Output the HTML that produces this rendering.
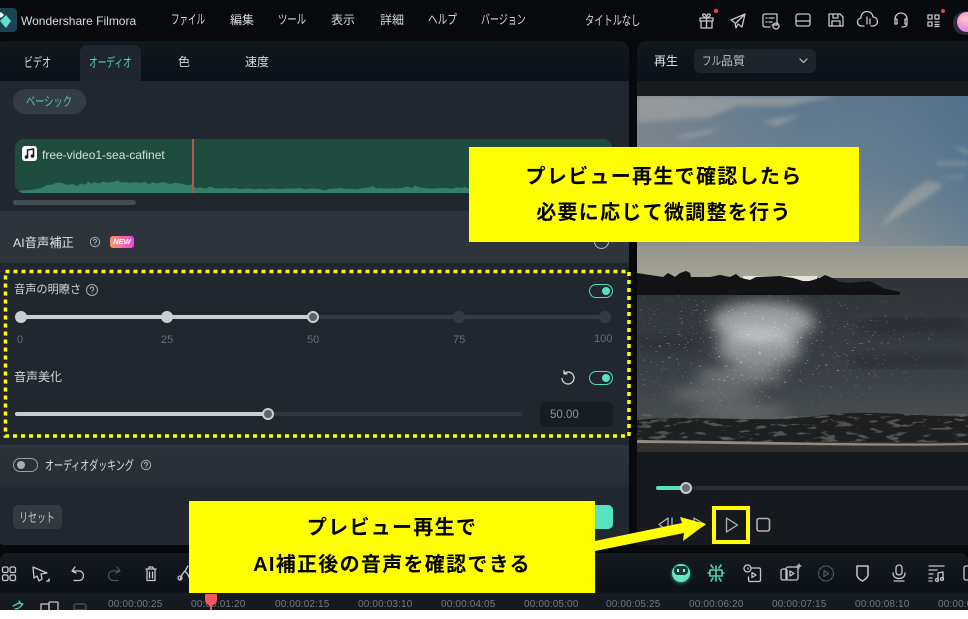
<!DOCTYPE html>
<html lang="ja"><head><meta charset="utf-8"><title>Filmora</title>
<style>
*{box-sizing:border-box;margin:0;padding:0}
html,body{width:968px;height:619px;overflow:hidden;background:#fff}
body{position:relative;font-family:"Liberation Sans","Noto Sans CJK JP",sans-serif;color:#d5d9dd}
.a{position:absolute}
.t{position:absolute;white-space:nowrap;line-height:1}
.k{transform:scaleX(.69);transform-origin:0 0}
.y{position:absolute;background:#ff0;color:#000;font-weight:700;font-size:20px;text-align:center;letter-spacing:1.3px}
svg{position:absolute;overflow:visible}
.i{fill:none;stroke:#c4c8cc;stroke-width:1.3;stroke-linecap:round;stroke-linejoin:round}
.tc{position:absolute;top:600px;font-size:10px;line-height:1;color:#6f7a85;letter-spacing:.15px;white-space:nowrap}
</style></head><body>
<div class="a" style="left:0;top:0;width:968px;height:610px;background:#07090c;overflow:hidden">

<!-- logo -->
<div class="a" style="left:-6px;top:8px;width:23px;height:24px;border-radius:4px;background:#1d4254"></div>
<svg style="left:0;top:0" width="20" height="40"><path d="M6 15l5 6-5 7-6-7z" fill="#5fe3c8"/><path d="M1 12l3 3-3 3-3-3z" fill="#fff"/></svg>
<div class="t" style="left:21px;top:15px;font-size:12px;color:#d8dcdf">Wondershare Filmora</div>
<div class="t k" style="left:171px;top:13px;font-size:13px;transform:scaleX(.655)">ファイル</div>
<div class="t" style="left:230px;top:14px;font-size:12px">編集</div>
<div class="t k" style="left:278px;top:13px;font-size:13px;transform:scaleX(.72)">ツール</div>
<div class="t" style="left:331px;top:14px;font-size:12px">表示</div>
<div class="t" style="left:380px;top:14px;font-size:12px">詳細</div>
<div class="t k" style="left:428px;top:13px;font-size:13px;transform:scaleX(.74)">ヘルプ</div>
<div class="t k" style="left:481px;top:13px;font-size:13px">バージョン</div>
<div class="t k" style="left:585px;top:14px;font-size:13px;transform:scaleX(.71)">タイトルなし</div>

<!-- top right icons -->
<svg class="i" style="left:0;top:0" width="968" height="40">
<path d="M700 18h13v3h-13zM701 21v7h11v-7M706.500 18v10M706.500 18c-3-1-5-3-3-4 2-.5 3 2 3 4zM706.500 18c3-1 5-3 3-4-2-.5-3 2-3 4z"/>
<path d="M731 20l14-6-3 13-4-3-2 4-1-5zM736 23l9-9"/>
<path d="M765 14h12v11h-5M765 14q-2 0-2 2v9q0 2 2 2h5M766 18h1M769 18h5M766 22h1M769 22h3"/><circle cx="776" cy="26" r="3"/>
<rect x="796" y="14" width="14" height="12" rx="2"/><path d="M796 21h14"/>
<path d="M829 14h11l3 3v9h-14zM833 14v4h5v-4M832 26v-5h8v5"/>
<path d="M864 26h-2a4 4 0 0 1-1-8 6 6 0 0 1 12-1 4.500 4.500 0 0 1 0 9h-2M867 17v7M870 19v5"/>
<path d="M895 21v-2a6 6 0 0 1 12 0v2M895 19v5h2v-5zM905 19h2v5h-2zM907 24c0 2-2 3-5 3"/>
<path d="M928 15h4v4h-4zM928 22h4v4h-4zM935 15h4v4h-4zM935 22h4M935 24.500h4M935 26.500h4"/>
</svg>
<div class="a" style="left:714px;top:9px;width:4px;height:4px;border-radius:50%;background:#f0444c"></div>
<div class="a" style="left:941px;top:9px;width:4px;height:4px;border-radius:50%;background:#f0444c"></div>
<div class="a" style="left:953px;top:11px;width:24px;height:24px;border-radius:50%;background:#2a2f36"></div>
<div class="a" style="left:957px;top:12px;width:20px;height:20px;border-radius:50%;background:radial-gradient(circle at 40% 35%,#ffc9c0,#e87fe6 70%)"></div>

<!-- left panel -->
<div class="a" style="left:-5px;top:41px;width:634px;height:504px;border-radius:10px;background:#20272e;overflow:hidden">
 <div class="a" style="left:0;top:0;width:634px;height:40px;background:linear-gradient(#12181e,#0a1119)"></div>
 <div class="a" style="left:85px;top:4px;width:61px;height:36px;border-radius:7px 7px 0 0;background:#20262d"></div>
 <div class="a" style="left:5px;top:170px;width:629px;height:52px;background:#2e343c"></div>
 <div class="a" style="left:5px;top:404px;width:629px;height:42px;background:linear-gradient(#2e343c,#262c33)"></div>
</div>
<div class="t k" style="left:24px;top:56px;font-size:13px">ビデオ</div>
<div class="t k" style="left:89px;top:56px;font-size:13px;color:#55cfb4;transform:scaleX(.665)">オーディオ</div>
<div class="t" style="left:178px;top:56px;font-size:12px">色</div>
<div class="t" style="left:245px;top:56px;font-size:12px">速度</div>
<div class="a" style="left:13px;top:89px;width:73px;height:25px;border-radius:13px;background:#343c44"></div>
<div class="t k" style="left:26px;top:95px;font-size:13px;color:#56bfa8;transform:scaleX(.71)">ベーシック</div>

<!-- clip -->
<div class="a" style="left:15px;top:139px;width:597px;height:54px;border-radius:9px;background:#1e4d40;overflow:hidden">
<svg style="left:0;top:0" width="597" height="54"><path transform="matrix(1 0 0 .64 0 19.500)" fill="#347f68" d="M0 54V52L8 50 17 49 26 46 33 41 37 41 41 38 47 38 51 41 58 40 62 43 66 39 71 41 73 36 76 39 80 37 84 39 88 36 92 38 96 37 100 36 103 34 106 38 110 37 115 38 120 37 125 38 130 37 134 40 138 37 142 39 147 37 151 38 155 40 160 38 165 39 169 40 173 42 176 40 178 44 182 46 186 45 190 47 195 44 199 46 204 47 210 46 215 47 220 46 225 48 230 47 235 47 240 48 245 47 250 48 255 47 260 47 265 48 270 47 275 47 280 47 285 46 290 48 295 47 300 47 305 48 310 50 315 47 320 47 325 46 330 47 335 47 340 48 345 47 350 46 355 45 358 43 361 47 366 46 370 47 374 47 378 46 382 47 386 46 390 45 393 44 397 46 400 42 404 45 409 46 414 47 420 47 425 46 430 46 434 47 438 47 442 45 446 46 450 45 455 47 456 54z"/></svg>
<div class="a" style="left:177px;top:0;width:2px;height:54px;background:#b4594c"></div>
</div>
<div class="a" style="left:22px;top:146px;width:15px;height:15px;border-radius:3px;background:#fff"></div>
<svg style="left:22px;top:146px" width="15" height="15"><path d="M5.500 11V4L11.500 3V10" fill="none" stroke="#1a1a1a" stroke-width="1.500"/><circle cx="4.500" cy="11" r="1.800" fill="#1a1a1a"/><circle cx="10.500" cy="10" r="1.800" fill="#1a1a1a"/></svg>
<div class="t" style="left:42px;top:149px;font-size:12px;color:#cfe1db">free-video1-sea-cafinet</div>
<div class="a" style="left:13px;top:200px;width:123px;height:5px;border-radius:3px;background:#444c56"></div>

<!-- AI section -->
<div class="t" style="left:13px;top:237px;font-size:12.300px;color:#e2e5e8">AI音声補正</div>
<svg class="i" style="left:89px;top:236px;stroke:#a8adb2;stroke-width:1" width="12" height="12"><circle cx="6" cy="6" r="4.700"/><path d="M4.500 4.800a1.500 1.500 0 1 1 2 1.500q-.5.300-.5 1M6 8.700v.1"/></svg>
<div class="a" style="left:110px;top:236px;width:24px;height:12px;border-radius:3px;background:linear-gradient(90deg,#f6975c,#ee45e6);font:italic 700 7.500px/12px 'Liberation Sans',sans-serif;color:#fff;text-align:center">NEW</div>
<div class="a" style="left:594px;top:234px;width:15px;height:15px;border-radius:50%;border:1.500px solid #b8bcc0"></div>

<!-- clarity -->
<div class="t" style="left:14px;top:285px;font-size:11.200px;color:#cdd2d7">音声の明瞭さ</div>
<svg class="i" style="left:85px;top:283px;stroke:#a8adb2;stroke-width:1" width="14" height="14"><circle cx="7" cy="7" r="5.500"/><path d="M5.300 5.700a1.700 1.700 0 1 1 2.300 1.600q-.6.400-.6 1M7 10v.1"/></svg>
<div class="a" style="left:589px;top:284px;width:24px;height:14px;border-radius:7px;border:1.300px solid #57d9bb"></div>
<div class="a" style="left:602px;top:287px;width:8px;height:8px;border-radius:50%;background:#57e3c2"></div>
<div class="a" style="left:21px;top:315px;width:292px;height:4px;background:#c8ced3"></div>
<div class="a" style="left:313px;top:315px;width:292px;height:4px;background:#343b44"></div>
<div class="a" style="left:15px;top:311px;width:12px;height:12px;border-radius:50%;background:#c8ced3"></div>
<div class="a" style="left:161px;top:311px;width:12px;height:12px;border-radius:50%;background:#c8ced3"></div>
<div class="a" style="left:307px;top:311px;width:12px;height:12px;border-radius:50%;background:#5c636b;border:2px solid #c8ced3"></div>
<div class="a" style="left:453px;top:311px;width:12px;height:12px;border-radius:50%;background:#343b44"></div>
<div class="a" style="left:599px;top:311px;width:12px;height:12px;border-radius:50%;background:#343b44"></div>
<div class="t" style="left:17px;top:335px;font-size:11px;color:#666e77">0</div>
<div class="t" style="left:161px;top:335px;font-size:11px;color:#666e77">25</div>
<div class="t" style="left:307px;top:335px;font-size:11px;color:#666e77">50</div>
<div class="t" style="left:453px;top:335px;font-size:11px;color:#666e77">75</div>
<div class="t" style="left:594px;top:334px;font-size:11px;color:#666e77">100</div>

<!-- beautify -->
<div class="t" style="left:14px;top:371px;font-size:12px">音声美化</div>
<svg class="i" style="left:560px;top:370px;stroke:#d0d4d8" width="16" height="16"><path d="M4 3.500a6 6 0 1 1-2 5M4 .8V3.800H7"/></svg>
<div class="a" style="left:589px;top:371px;width:24px;height:14px;border-radius:7px;border:1.300px solid #57d9bb"></div>
<div class="a" style="left:602px;top:374px;width:8px;height:8px;border-radius:50%;background:#57e3c2"></div>
<div class="a" style="left:15px;top:412px;width:254px;height:4px;border-radius:2px;background:#c8ced3"></div>
<div class="a" style="left:268px;top:412px;width:254px;height:4px;border-radius:2px;background:#2f363e"></div>
<div class="a" style="left:262px;top:408px;width:12px;height:12px;border-radius:50%;background:#5c636b;border:2px solid #c8ced3"></div>
<div class="a" style="left:540px;top:402px;width:73px;height:25px;border-radius:5px;background:#181d22"></div>
<div class="t" style="left:550px;top:410px;font-size:11.500px;color:#8c95a0">50.00</div>

<!-- dashed annotation -->
<svg style="left:0;top:0" width="640" height="445"><rect x="5.500" y="271.500" width="623.500" height="164.500" fill="none" stroke="#ff0" stroke-width="3.500" stroke-dasharray="4 4"/></svg>

<!-- ducking -->
<div class="a" style="left:13px;top:458px;width:25px;height:14px;border-radius:7px;border:1.200px solid #9aa0a6"></div>
<div class="a" style="left:17px;top:461px;width:8px;height:8px;border-radius:50%;background:#a9aeb3"></div>
<div class="t k" style="left:45px;top:459px;font-size:13px;color:#d8dbde">オーディオダッキング</div>
<svg class="i" style="left:140px;top:459px;stroke:#a8adb2;stroke-width:1" width="12" height="12"><circle cx="6" cy="6" r="4.700"/><path d="M4.500 4.800a1.500 1.500 0 1 1 2 1.500q-.5.300-.5 1M6 8.700v.1"/></svg>
<div class="a" style="left:13px;top:505px;width:49px;height:24px;border-radius:5px;background:#333a42"></div>
<div class="t k" style="left:19px;top:511px;font-size:13px;color:#c0c5ca">リセット</div>
<div class="a" style="left:580px;top:505px;width:33px;height:24px;border-radius:5px;background:#57e3c2"></div>

<!-- right panel -->
<div class="a" style="left:637px;top:41px;width:340px;height:504px;border-radius:10px;background:#191c1f;overflow:hidden">
 <div class="a" style="left:0;top:0;width:340px;height:40px;background:linear-gradient(#12181e,#0a1119)"></div>
 <div class="a" style="left:0;top:411px;width:340px;height:93px;background:#181b1f"></div>
</div>
<div class="t" style="left:654px;top:55px;font-size:12px;color:#e4e6e8">再生</div>
<div class="a" style="left:694px;top:49px;width:122px;height:24px;border-radius:6px;background:#1e242b"></div>
<div class="t k" style="left:702px;top:55px;font-size:12px;color:#b9bec3;transform:scaleX(.8)">フル</div>
<div class="t" style="left:721px;top:55px;font-size:12px;color:#b9bec3">品質</div>
<svg class="i" style="left:798px;top:57px;stroke:#a9aeb3" width="12" height="8"><path d="M2 2l3.500 3.500L9 2"/></svg>

<!-- photo -->
<svg style="left:637px;top:96px;overflow:hidden" width="331" height="356" viewBox="0 0 331 356">
<defs>
<linearGradient id="sky" x1="0" y1="0" x2="0" y2="1"><stop offset="0" stop-color="#5a748b"/><stop offset=".45" stop-color="#6a7f8f"/><stop offset=".75" stop-color="#8a908f"/><stop offset="1" stop-color="#a8a496"/></linearGradient>
<linearGradient id="skyl" x1="0" y1="0" x2="1" y2="0"><stop offset="0" stop-color="#88898b" stop-opacity=".7"/><stop offset=".5" stop-color="#7a8a98" stop-opacity=".15"/><stop offset="1" stop-color="#4a6f90" stop-opacity=".5"/></linearGradient>
<linearGradient id="sea" x1="0" y1="0" x2="0" y2="1"><stop offset="0" stop-color="#303439"/><stop offset=".55" stop-color="#3a4045"/><stop offset="1" stop-color="#505556"/></linearGradient>
<radialGradient id="gm" cx=".36" cy=".38" r=".6"><stop offset="0" stop-color="#fff"/><stop offset=".5" stop-color="#999"/><stop offset="1" stop-color="#111"/></radialGradient>
<mask id="spm"><rect x="0" y="199" width="331" height="130" fill="url(#gm)"/></mask>
<filter id="sp" x="0" y="0" width="100%" height="100%" color-interpolation-filters="sRGB"><feTurbulence type="fractalNoise" baseFrequency=".32 .7" numOctaves="2" seed="4"/><feColorMatrix values="0 0 0 0 1 0 0 0 0 1 0 0 0 0 1 9 9 0 0 -11.800"/></filter>
<filter id="dk" x="0" y="0" width="100%" height="100%" color-interpolation-filters="sRGB"><feTurbulence type="fractalNoise" baseFrequency=".06 .25" numOctaves="3" seed="9"/><feColorMatrix values="0 0 0 0 .42 0 0 0 0 .42 0 0 0 0 .4 9 0 0 0 -5.200"/></filter>
<filter id="b2" color-interpolation-filters="sRGB"><feGaussianBlur stdDeviation="2.500"/></filter>
<filter id="b5" color-interpolation-filters="sRGB"><feGaussianBlur stdDeviation="7"/></filter>
</defs>
<rect width="331" height="183" fill="url(#sky)"/>
<rect width="331" height="150" fill="url(#skyl)"/>
<g filter="url(#b2)" fill="#a8a8a5" opacity=".6">
<path d="M0 0H200L150 10 100 10 70 22 0 26z"/>
<path d="M40 40L85 31 70 38 45 43z"/><path d="M125 26L165 18 140 30z"/>
<path d="M243 132L280 108 300 95 306 88 290 85 275 95 255 115z"/>
<path d="M300 66h31v3h-31zM300 82l26-2v3zM316 50l15 4v5z"/>
</g>
<rect y="182" width="331" height="174" fill="url(#sea)"/>
<rect x="106" y="180" width="74" height="5" fill="#e6e4da"/>
<g filter="url(#b5)" fill="#101316" opacity=".7"><path d="M225 226h106v6H225zM215 263h116v6H215zM0 245h60v5H0z"/></g>
<g filter="url(#b5)">
<ellipse cx="126" cy="226" rx="52" ry="20" fill="#f4f4f4" opacity=".55"/>
<ellipse cx="122" cy="252" rx="42" ry="20" fill="#fff" opacity=".45"/>
<ellipse cx="103" cy="280" rx="46" ry="6" fill="#fff" opacity=".4"/>
<ellipse cx="78" cy="298" rx="46" ry="5" fill="#eee" opacity=".35"/>
<ellipse cx="103" cy="316" rx="50" ry="4" fill="#ddd" opacity=".4"/>
</g>
<rect y="199" width="331" height="130" filter="url(#sp)" mask="url(#spm)" opacity=".7"/>
<path d="M0 324C60 318 120 328 180 320S280 322 331 320V348H0z" fill="#1d1f20"/>
<rect y="318" width="331" height="28" filter="url(#dk)" opacity=".7"/>
<path d="M0 346H331V356H0z" fill="#34302d"/>
<path d="M0 344C120 345 240 349 331 347V349C240 351 120 348 0 347z" fill="#8f8b85"/>
<path d="M0 177L13 179 26 181 31 177 38 181 43 177 49 175 53 177 54 181 73 181 83 179 93 181 99 178 104 182 113 184 119 181 143 180 156 182 169 186 183 182 188 179 193 181 203 186 213 187 233 185 246 192 263 196 263 199H0z" fill="#131215"/>
</svg>

<!-- transport -->
<div class="a" style="left:637px;top:452px;width:331px;height:93px;background:#16191d"></div>
<div class="a" style="left:656px;top:486px;width:312px;height:4px;background:#2a2e32"></div>
<div class="a" style="left:656px;top:486px;width:30px;height:4px;border-radius:2px;background:#57e3c2"></div>
<div class="a" style="left:680px;top:482px;width:12px;height:12px;border-radius:50%;background:#6c7278;border:2px solid #c8ccd0"></div>
<svg class="i" style="left:0;top:0;stroke:#b0b4b8" width="968" height="560">
<path d="M668 518v13l-9-6.500zM672 518v13"/>
<path d="M694 518l11 6.500-11 6.500z"/>
<path d="M726.500 518v14l11-7z"/>
<rect x="757" y="518.500" width="12.500" height="12.500" rx="2" stroke-width="1.600"/>
</svg>

<!-- timeline toolbar -->
<div class="a" style="left:0;top:553px;width:968px;height:40px;border-radius:8px 8px 0 0;background:linear-gradient(#151a20,#0c1218)"></div>
<div class="a" style="left:0;top:593px;width:968px;height:17px;background:#141a20"></div>
<svg class="i" style="left:0;top:0" width="968" height="610">
<rect x="2.500" y="567" width="5.500" height="5.500" rx="1.500"/><rect x="10" y="567" width="5.500" height="5.500" rx="1.500"/><rect x="2.500" y="575" width="5.500" height="5.500" rx="1.500"/><rect x="10" y="575" width="5.500" height="5.500" rx="1.500"/>
<path d="M33 567l14 6-6 1 1 5-3 2-2-5-3 2z"/><path d="M47 581h2v-2" stroke-width="1.500"/>
<path d="M75 567l-3 4 4 2M72 571h8a5 5 0 0 1 0 9.500h-6"/>
<path style="stroke:#4d545b" d="M117 567l3 4-4 2M120 571h-8a5 5 0 0 0 0 9.500h6"/>
<path d="M146 569h10M149 569v-2h4v2M147 569v11.500h8V569M149.500 572v6M152.500 572v6"/>
<path d="M180 580q1-5 5-9l3-5M190 580q-1-5-5-9"/>
<circle cx="180" cy="578" r="2"/>
<path d="M710 570h12v6h-12zM716 566v3M711 565l2 3M721 565l-2 3M716 577v4M711 581l2-3M721 581l-2-3M708 573h2M722 573h2M716 570v6" style="stroke:#4fd2b4;stroke-width:1.600"/>
<circle cx="747.500" cy="568.500" r="3.500"/><path d="M748 569v-1M751 568h8q1.500 0 1.500 1.500V580q0 1.500-1.500 1.500h-9q-1.500 0-1.500-1.500v-3"/><path d="M752 572.500v5l4-2.500z"/>
<rect x="781" y="569" width="6" height="11" rx="2"/><rect x="786" y="567" width="12" height="13" rx="2"/><path d="M790 571v5l4-2.500zM799 564v4M797 566h4"/>
<g style="stroke:#50565d"><circle cx="826" cy="573.500" r="7.500" stroke-dasharray="3 1.500"/><path d="M824 570.500v6l4.500-3z"/></g>
<path d="M857 566h11v9q0 3-5.500 6-5.500-3-5.500-6z" stroke-width="1.500"/>
<rect x="896" y="565" width="6" height="10" rx="3"/><path d="M893 573c0 4 3 5.500 6 5.500s6-1.500 6-5.500M894 581h10"/>
<path d="M929 566h15M929 570h8M929 574h4M929 578h3M929 581h3M938 580v-7l5-1v7"/><circle cx="937" cy="580" r="1.500"/><circle cx="942" cy="579" r="1.500"/>
<rect x="964" y="566" width="8" height="14" rx="2"/>
<path d="M13 606l6-3 4 1M15 609q4 0 7-4l-3-4" style="stroke:#4fd2b4"/>
<rect x="41" y="604" width="8" height="8"/><rect x="49" y="602" width="9" height="9" rx="1"/>
<rect x="74" y="604" width="12" height="6" rx="2" style="stroke:#4d545b"/>
</svg>
<div class="a" style="left:672px;top:564px;width:18px;height:18px;border-radius:50%;background:#67e5bf;box-shadow:0 1px 3px #2d9f80"></div>
<div class="a" style="left:674px;top:566px;width:14px;height:9px;border-radius:4px;background:#1e3a3a"></div>
<div class="a" style="left:677px;top:569px;width:2px;height:3px;background:#6fe;"></div>
<div class="a" style="left:683px;top:569px;width:2px;height:3px;background:#6fe;"></div>

<div class="tc" style="left:108px">00:00:00:25</div>
<div class="tc" style="left:191px">00:00:01:20</div>
<div class="tc" style="left:275px">00:00:02:15</div>
<div class="tc" style="left:358px">00:00:03:10</div>
<div class="tc" style="left:441px">00:00:04:05</div>
<div class="tc" style="left:524px">00:00:05:00</div>
<div class="tc" style="left:606px">00:00:05:25</div>
<div class="tc" style="left:689px">00:00:06:20</div>
<div class="tc" style="left:772px">00:00:07:15</div>
<div class="tc" style="left:855px">00:00:08:10</div>
<div class="tc" style="left:938px">00:00:09:05</div>
<svg style="left:205px;top:594px" width="14" height="16"><path d="M0 1q0-1 1-1h10q1 0 1 1v5q0 3-5 6v4h-2v-4q-5-3-5-6z" fill="#f25a5f"/></svg>

<!-- annotations -->
<div class="y" style="left:469px;top:147px;width:390px;height:95px;padding-top:12px;line-height:36px">プレビュー再生で確認したら<br>必要に応じて微調整を行う</div>
<div class="y" style="left:189px;top:501px;width:406px;height:92px;padding-top:9px;line-height:37px">プレビュー再生で<br>AI補正後の音声を確認できる</div>
<div class="a" style="left:712px;top:506px;width:38px;height:38px;border:4px solid #ff0"></div>
<svg style="left:0;top:0" width="968" height="610"><path d="M595 541L682 523 680 517 706 524 683 541 684 533 595 551z" fill="#ff0"/></svg>
</div>
</body></html>
